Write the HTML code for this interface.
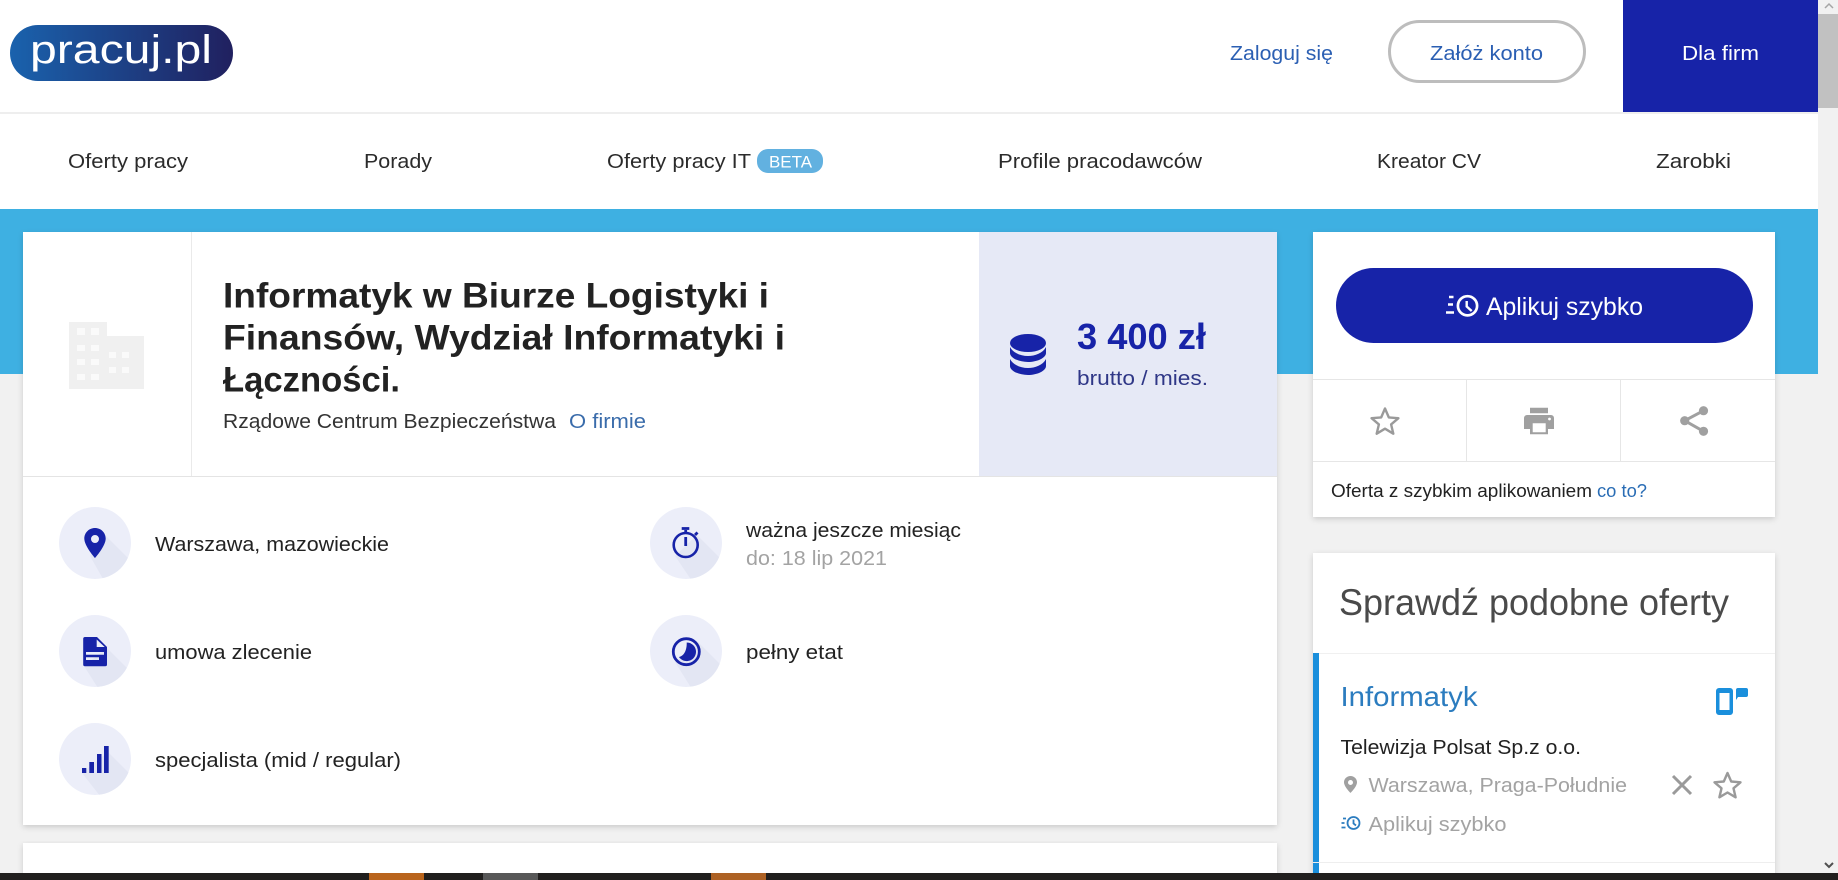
<!DOCTYPE html>
<html lang="pl"><head><meta charset="utf-8"><title>Informatyk - pracuj.pl</title>
<style>
html,body{margin:0;padding:0;width:1838px;height:880px;overflow:hidden;background:#f1f1f1}
svg{display:block}
text{font-family:"Liberation Sans",sans-serif;fill:#222}
</style></head><body>
<svg width="1838" height="880" viewBox="0 0 1838 880" xmlns="http://www.w3.org/2000/svg">
<defs>
<linearGradient id="lg" x1="0" x2="1" y1="0" y2="0"><stop offset="0" stop-color="#1a62ad"/><stop offset="1" stop-color="#20205f"/></linearGradient>
<filter id="sh" x="-5%" y="-5%" width="110%" height="110%"><feDropShadow dx="0" dy="2" stdDeviation="3" flood-color="#000" flood-opacity=".16"/></filter>
<clipPath id="c1"><circle cx="95" cy="543" r="36"/></clipPath>
<clipPath id="c2"><circle cx="95" cy="651" r="36"/></clipPath>
<clipPath id="c3"><circle cx="95" cy="759" r="36"/></clipPath>
<clipPath id="c4"><circle cx="686" cy="543" r="36"/></clipPath>
<clipPath id="c5"><circle cx="686" cy="651" r="36"/></clipPath>
</defs>
<rect width="1838" height="880" fill="#f1f1f1"/>
<!-- header -->
<rect width="1818" height="112" fill="#fff"/>
<rect y="112" width="1818" height="2" fill="#eee"/>
<rect y="114" width="1818" height="95" fill="#fff"/>
<rect y="209" width="1818" height="165" fill="#3eb0e2"/>
<rect x="10" y="25" width="223" height="56" rx="28" fill="url(#lg)"/>
<text x="30" y="63" font-size="40" textLength="182" lengthAdjust="spacingAndGlyphs" style="fill:#fff">pracuj.pl</text>
<text x="1230" y="60" font-size="20.500" textLength="103" lengthAdjust="spacingAndGlyphs" style="fill:#2b5fb3">Zaloguj się</text>
<rect x="1389.500" y="21.500" width="195" height="60" rx="30" fill="#fff" stroke="#bdbdbd" stroke-width="3"/>
<text x="1430" y="60" font-size="20.500" textLength="113" lengthAdjust="spacingAndGlyphs" style="fill:#2b5fb3">Załóż konto</text>
<rect x="1623" width="195" height="112" fill="#1723a8"/>
<text x="1682" y="60" font-size="20.500" textLength="77" lengthAdjust="spacingAndGlyphs" style="fill:#fff">Dla firm</text>
<!-- nav -->
<text x="68" y="168" font-size="20.500" textLength="120" lengthAdjust="spacingAndGlyphs" style="fill:#2b2b2b">Oferty pracy</text>
<text x="364" y="168" font-size="20.500" textLength="68" lengthAdjust="spacingAndGlyphs" style="fill:#2b2b2b">Porady</text>
<text x="607" y="168" font-size="20.500" textLength="144" lengthAdjust="spacingAndGlyphs" style="fill:#2b2b2b">Oferty pracy IT</text>
<rect x="757" y="149" width="66" height="24" rx="11" fill="#62b1e0"/>
<text x="769" y="167.500" font-size="17" textLength="43" lengthAdjust="spacingAndGlyphs" style="fill:#fff">BETA</text>
<text x="998" y="168" font-size="20.500" textLength="204" lengthAdjust="spacingAndGlyphs" style="fill:#2b2b2b">Profile pracodawców</text>
<text x="1377" y="168" font-size="20.500" textLength="104" lengthAdjust="spacingAndGlyphs" style="fill:#2b2b2b">Kreator CV</text>
<text x="1656" y="168" font-size="20.500" textLength="75" lengthAdjust="spacingAndGlyphs" style="fill:#2b2b2b">Zarobki</text>
<!-- scrollbar -->
<rect x="1818" width="20" height="873" fill="#f1f1f1"/>
<rect x="1818" y="14" width="20" height="94" fill="#c1c1c1"/>
<path d="M1825 8l4-4 4 4" fill="none" stroke="#a5a5a5" stroke-width="1.500"/>
<path d="M1825 863l4 4 4-4" fill="none" stroke="#505050" stroke-width="2"/>
<!-- main card -->
<rect x="23" y="232" width="1254" height="593" fill="#fff" filter="url(#sh)"/>
<rect x="191" y="232" width="1" height="244" fill="#eaeaea"/>
<rect x="23" y="476" width="1254" height="1" fill="#e4e4e4"/>
<path fill="#f0f0f0" d="M69 322h38v14h37v53H69z"/>
<g fill="#fafafa"><rect x="77" y="328" width="8" height="7"/><rect x="91" y="328" width="8" height="7"/><rect x="77" y="345" width="8" height="6"/><rect x="91" y="345" width="8" height="6"/><rect x="77" y="359" width="8" height="6"/><rect x="91" y="359" width="8" height="6"/><rect x="77" y="374" width="8" height="6"/><rect x="91" y="374" width="8" height="6"/><rect x="109" y="352" width="7" height="6"/><rect x="122" y="352" width="7" height="6"/><rect x="109" y="367" width="7" height="6"/><rect x="122" y="367" width="7" height="6"/></g>
<text x="223" y="307.500" font-size="35" font-weight="700" textLength="546" lengthAdjust="spacingAndGlyphs">Informatyk w Biurze Logistyki i</text>
<text x="223" y="349.500" font-size="35" font-weight="700" textLength="562" lengthAdjust="spacingAndGlyphs">Finansów, Wydział Informatyki i</text>
<text x="223" y="391.500" font-size="35" font-weight="700" textLength="177" lengthAdjust="spacingAndGlyphs">Łączności.</text>
<text x="223" y="428" font-size="20.500" textLength="333" lengthAdjust="spacingAndGlyphs" style="fill:#333">Rządowe Centrum Bezpieczeństwa</text>
<text x="569" y="428" font-size="20.500" textLength="77" lengthAdjust="spacingAndGlyphs" style="fill:#3a6cab">O firmie</text>
<!-- salary -->
<rect x="979" y="232" width="298" height="244" fill="#e6e9f6"/>
<g fill="#1723a8">
<ellipse cx="1028" cy="343" rx="18" ry="9"/>
<path d="M1010 347c3 6 11 9 18 9s15-3 18-9v6c0 5-9 9-18 9s-18-4-18-9z"/>
<path d="M1010 359c3 6 11 9 18 9s15-3 18-9v7c0 5-9 9-18 9s-18-4-18-9z"/>
</g>
<text x="1077" y="349" font-size="36" font-weight="700" textLength="129" lengthAdjust="spacingAndGlyphs" style="fill:#1723a8">3 400 zł</text>
<text x="1077" y="385" font-size="20.500" textLength="131" lengthAdjust="spacingAndGlyphs" style="fill:#2f3787">brutto / mies.</text>
<!-- circles -->
<g fill="#eceef9">
<circle cx="95" cy="543" r="36"/><circle cx="95" cy="651" r="36"/><circle cx="95" cy="759" r="36"/><circle cx="686" cy="543" r="36"/><circle cx="686" cy="651" r="36"/>
</g>
<g fill="#e3e6f3">
<path clip-path="url(#c1)" d="M104 534L140 570V600H115L90 556z"/>
<path clip-path="url(#c2)" d="M107 648L140 681V710H112L84 666z"/>
<path clip-path="url(#c3)" d="M108 752L140 784V815H115L82 773z"/>
<path clip-path="url(#c4)" d="M697 535L731 569V600H705L675 556z"/>
<path clip-path="url(#c5)" d="M698 642L731 675V710H705L675 662z"/>
</g>
<!-- row icons -->
<path fill="#1723a8" fill-rule="evenodd" d="M95 528c-6 0-10.700 4.700-10.700 10.600 0 7.400 10.700 19.400 10.700 19.400s10.700-12 10.700-19.400C105.700 532.700 101 528 95 528zM95 535a4 4 0 1 1 0 8 4 4 0 0 1 0-8z"/>
<path fill="#1723a8" fill-rule="evenodd" d="M85 637H97l10 10v17.500a1.800 1.800 0 0 1-1.800 1.800H85a1.800 1.800 0 0 1-1.800-1.800V638.800A1.800 1.800 0 0 1 85 637zM86 652v2.700h18V652zM86 657.300v2.700h13v-2.700zM96.700 639.500v7.500h8z"/>
<g fill="#1723a8"><rect x="82" y="768" width="4.300" height="5"/><rect x="89.300" y="762" width="4.700" height="11"/><rect x="97" y="754" width="4.500" height="19"/><rect x="104" y="746" width="4.700" height="27"/></g>
<g fill="none" stroke="#1723a8"><circle cx="685.700" cy="545" r="12" stroke-width="2.600"/><path d="M685.700 537v9" stroke-width="2.800"/><path d="M681.700 528.500h7.600" stroke-width="2.800"/><path d="M685.700 530v3" stroke-width="2.800"/><path d="M695 535l2.500-2.500" stroke-width="2.800"/></g>
<circle cx="686.300" cy="651.700" r="13" fill="none" stroke="#1723a8" stroke-width="2.800"/>
<path fill="#1723a8" d="M686.700 642.500A9.300 9.300 0 1 1 679 657C684 656 687 650 686.700 642.500z"/>
<text x="155" y="551" font-size="20.500" textLength="234" lengthAdjust="spacingAndGlyphs">Warszawa, mazowieckie</text>
<text x="155" y="659" font-size="20.500" textLength="157" lengthAdjust="spacingAndGlyphs">umowa zlecenie</text>
<text x="155" y="767" font-size="20.500" textLength="246" lengthAdjust="spacingAndGlyphs">specjalista (mid / regular)</text>
<text x="746" y="537" font-size="20.500" textLength="215" lengthAdjust="spacingAndGlyphs">ważna jeszcze miesiąc</text>
<text x="746" y="565" font-size="20.500" textLength="141" lengthAdjust="spacingAndGlyphs" style="fill:#a3a3a3">do: 18 lip 2021</text>
<text x="746" y="659" font-size="20.500" textLength="97" lengthAdjust="spacingAndGlyphs">pełny etat</text>
<!-- next card -->
<rect x="23" y="843" width="1254" height="40" fill="#fff" filter="url(#sh)"/>
<!-- apply card -->
<rect x="1313" y="232" width="462" height="285" fill="#fff" filter="url(#sh)"/>
<rect x="1336" y="268" width="417" height="75" rx="37.500" fill="#1723a8"/>
<g fill="none" stroke="#fff"><circle cx="1467.500" cy="305.800" r="9.600" stroke-width="2.700"/><path d="M1466.700 301v5.500l5 4.500" stroke-width="2.400"/><path d="M1449 297h4.500M1448 304.500h5M1446 312.500h8" stroke-width="2.600"/></g>
<text x="1486" y="315" font-size="25" textLength="157" lengthAdjust="spacingAndGlyphs" style="fill:#fff">Aplikuj szybko</text>
<g fill="#e6e6e6"><rect x="1313" y="379" width="462" height="1"/><rect x="1313" y="461" width="462" height="1"/><rect x="1466" y="379" width="1" height="82"/><rect x="1620" y="379" width="1" height="82"/></g>
<path d="M1385 408.500l3.800 8.900 9.600.8-7.300 6.200 2.200 9.300-8.300-5-8.300 5 2.200-9.300-7.300-6.200 9.600-.8z" fill="none" stroke="#9a9a9a" stroke-width="2.400" stroke-linejoin="round"/>
<path fill="#a0a0a0" fill-rule="evenodd" d="M1530 407.700h18v5.600h-18zM1527 415h24a3 3 0 0 1 3 3v11h-6v5.300h-18V429h-6v-11a3 3 0 0 1 3-3zM1532.700 423.300v9h13v-9z"/>
<circle cx="1549.500" cy="419" r="1.400" fill="#fff"/>
<g fill="#a0a0a0"><circle cx="1703.500" cy="410.700" r="4.600"/><circle cx="1684.700" cy="420.700" r="4.600"/><circle cx="1703.500" cy="431.300" r="4.600"/><path d="M1703.500 410.700l-18.800 10 18.800 10.600" fill="none" stroke="#a0a0a0" stroke-width="3"/></g>
<text x="1331" y="497" font-size="18.500" textLength="261" lengthAdjust="spacingAndGlyphs">Oferta z szybkim aplikowaniem</text>
<text x="1597" y="497" font-size="18.500" textLength="50" lengthAdjust="spacingAndGlyphs" style="fill:#2a6db5">co to?</text>
<!-- similar card -->
<rect x="1313" y="553" width="462" height="330" fill="#fff" filter="url(#sh)"/>
<text x="1339" y="615" font-size="37" textLength="390" lengthAdjust="spacingAndGlyphs" style="fill:#4a4a4a">Sprawdź podobne oferty</text>
<rect x="1313" y="653" width="462" height="1" fill="#f0f0f0"/>
<rect x="1313" y="653" width="6" height="220" fill="#1a8fdc"/>
<text x="1340.500" y="706" font-size="28" textLength="137" lengthAdjust="spacingAndGlyphs" style="fill:#2b7cbf">Informatyk</text>
<path fill="#1a8fdc" fill-rule="evenodd" d="M1719 688h11a3 3 0 0 1 3 3v21a3 3 0 0 1-3 3h-11a3 3 0 0 1-3-3v-21a3 3 0 0 1 3-3zM1719.500 693v17h10v-17z"/>
<path fill="#1a8fdc" d="M1738 688h8a2 2 0 0 1 2 2v5a2 2 0 0 1-2 2h-8l-2 3v-10a2 2 0 0 1 2-2z"/>
<text x="1340.500" y="754" font-size="20.500" textLength="240.500" lengthAdjust="spacingAndGlyphs">Telewizja Polsat Sp.z o.o.</text>
<path fill="#a0a0a0" fill-rule="evenodd" d="M1350.500 776c-3.600 0-6.500 2.900-6.500 6.300 0 4.500 6.500 10.700 6.500 10.700s6.500-6.200 6.500-10.700c0-3.400-2.900-6.300-6.500-6.300zM1350.500 780a2.500 2.500 0 1 1 0 5 2.500 2.500 0 0 1 0-5z"/>
<text x="1368.500" y="792" font-size="20.500" textLength="258.500" lengthAdjust="spacingAndGlyphs" style="fill:#a3a3a3">Warszawa, Praga-Południe</text>
<path d="M1673 776l18 18M1691 776l-18 18" stroke="#9a9a9a" stroke-width="3" fill="none"/>
<path d="M1727.500 773l3.700 8.500 9.300.8-7 6 2.100 9-8.100-4.800-8.100 4.800 2.100-9-7-6 9.300-.8z" fill="none" stroke="#9a9a9a" stroke-width="2.400" stroke-linejoin="round"/>
<g fill="none" stroke="#2b7cbf" stroke-width="1.800"><circle cx="1353.500" cy="823" r="6"/><path d="M1353.500 819.500v4l2.500 2"/><path d="M1343 818.500h3M1341.500 823h3M1341.500 827.500h4"/></g>
<text x="1368.500" y="831" font-size="20.500" textLength="138" lengthAdjust="spacingAndGlyphs" style="fill:#a3a3a3">Aplikuj szybko</text>
<rect x="1313" y="862" width="462" height="1" fill="#eee"/>
<!-- taskbar -->
<rect y="873" width="1838" height="7" fill="#211f1e"/>
<rect x="369" y="873" width="55" height="7" fill="#b9641c"/>
<rect x="483" y="873" width="55" height="7" fill="#585858"/>
<rect x="711" y="873" width="55" height="7" fill="#ad6124"/>
</svg>
</body></html>
